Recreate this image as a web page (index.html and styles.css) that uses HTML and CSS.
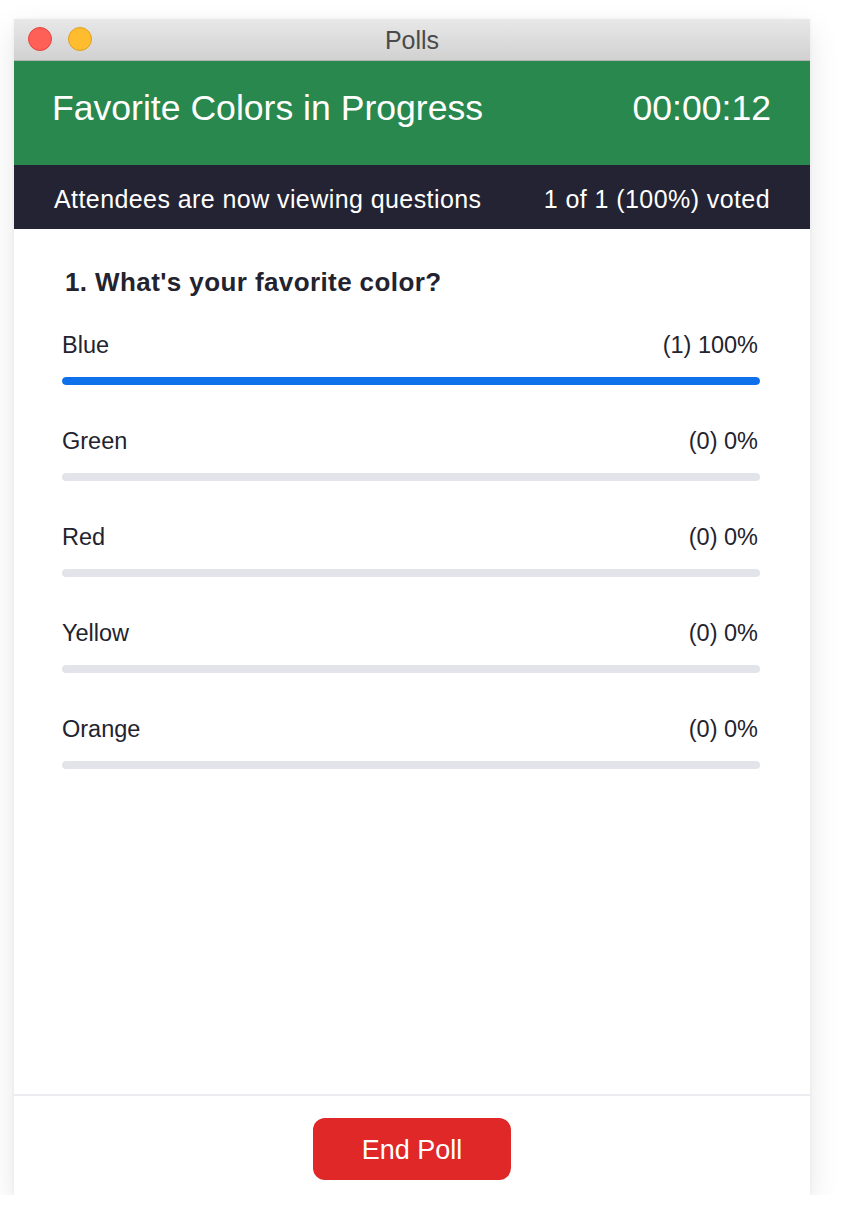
FILE: index.html
```html
<!DOCTYPE html>
<html lang="en">
<head>
<meta charset="utf-8">
<title>Polls</title>
<link rel="stylesheet" href="styles.css">
</head>
<body>
<div class="window">
  <div class="titlebar">
    <div class="lights">
      <span class="light light-red"></span>
      <span class="light light-yellow"></span>
    </div>
    <div class="title">Polls</div>
    <div></div>
  </div>
  <div class="header">
    <div class="poll-name">Favorite Colors in Progress</div>
    <div class="timer">00:00:12</div>
  </div>
  <div class="status">
    <div>Attendees are now viewing questions</div>
    <div>1 of 1 (100%) voted</div>
  </div>
  <div class="content">
    <div class="question">1. What's your favorite color?</div>
    <div class="options">
      <div class="option">
        <div class="option-row"><span>Blue</span><span>(1) 100%</span></div>
        <div class="bar"><div class="bar-fill" style="width:100%"></div></div>
      </div>
      <div class="option">
        <div class="option-row"><span>Green</span><span>(0) 0%</span></div>
        <div class="bar"><div class="bar-fill" style="width:0%"></div></div>
      </div>
      <div class="option">
        <div class="option-row"><span>Red</span><span>(0) 0%</span></div>
        <div class="bar"><div class="bar-fill" style="width:0%"></div></div>
      </div>
      <div class="option">
        <div class="option-row"><span>Yellow</span><span>(0) 0%</span></div>
        <div class="bar"><div class="bar-fill" style="width:0%"></div></div>
      </div>
      <div class="option">
        <div class="option-row"><span>Orange</span><span>(0) 0%</span></div>
        <div class="bar"><div class="bar-fill" style="width:0%"></div></div>
      </div>
    </div>
  </div>
  <div class="footer">
    <button class="end-btn" type="button">End Poll</button>
  </div>
</div>
</body>
</html>
```
FILE: styles.css
```css
* { box-sizing: border-box; }

html, body {
  margin: 0;
  padding: 0;
  background: #ffffff;
}

body {
  font-family: "Liberation Sans", Arial, sans-serif;
  color: #23232f;
}

.window {
  margin: 19px 0 0 14px;
  width: 796px;
  height: 1176px;
  display: flex;
  flex-direction: column;
  background: #ffffff;
  box-shadow: 0 12px 30px rgba(0, 0, 0, 0.1), 0 0 4px rgba(0, 0, 0, 0.05);
}

.titlebar {
  height: 42px;
  display: grid;
  grid-template-columns: 1fr auto 1fr;
  align-items: start;
  background: linear-gradient(#e8e8e8, #d1d1d1);
  border-bottom: 1px solid #b4b4b4;
}

.lights {
  display: flex;
  gap: 16px;
  padding: 8px 0 0 14px;
}

.light {
  width: 24px;
  height: 24px;
  border-radius: 50%;
}

.light-red {
  background: #fe5f57;
  border: 1px solid #e2463f;
}

.light-yellow {
  background: #febc2e;
  border: 1px solid #dfa024;
}

.title {
  padding-top: 6px;
  font-size: 25px;
  line-height: 30px;
  color: #4a4a4a;
}

.header {
  height: 104px;
  flex-shrink: 0;
  display: flex;
  justify-content: space-between;
  align-items: flex-start;
  padding: 26px 39px 0 38px;
  background: #29884d;
  color: #ffffff;
  font-size: 35.6px;
  line-height: 42px;
  font-weight: 300;
}

.status {
  height: 64px;
  flex-shrink: 0;
  display: flex;
  justify-content: space-between;
  align-items: flex-start;
  padding: 19px 40px 0 40px;
  background: #242333;
  color: #ffffff;
  font-size: 25px;
  line-height: 30px;
  letter-spacing: 0.42px;
}

.content {
  flex: 1;
  padding: 38px 50px 0 48px;
}

.question {
  padding-left: 3px;
  font-size: 26px;
  line-height: 30px;
  font-weight: 700;
  letter-spacing: 0.4px;
  color: #23232f;
}

.options {
  margin-top: 34px;
  display: flex;
  flex-direction: column;
  gap: 42px;
}

.option-row {
  display: flex;
  justify-content: space-between;
  padding-right: 2px;
  font-size: 23.5px;
  line-height: 28px;
  color: #23232f;
}

.bar {
  margin-top: 18px;
  height: 8px;
  border-radius: 4px;
  background: #e3e3ea;
  overflow: hidden;
}

.bar-fill {
  height: 100%;
  border-radius: 4px;
  background: #0e71eb;
}

.footer {
  flex-shrink: 0;
  border-top: 2px solid #ebebf0;
  padding: 22px 0 15px;
  display: flex;
  justify-content: center;
}

.end-btn {
  width: 198px;
  height: 62px;
  border: none;
  border-radius: 12px;
  background: #e02828;
  color: #ffffff;
  font-family: "Liberation Sans", Arial, sans-serif;
  font-size: 27px;
  line-height: 1;
  padding: 2px 0 0;
}
```
